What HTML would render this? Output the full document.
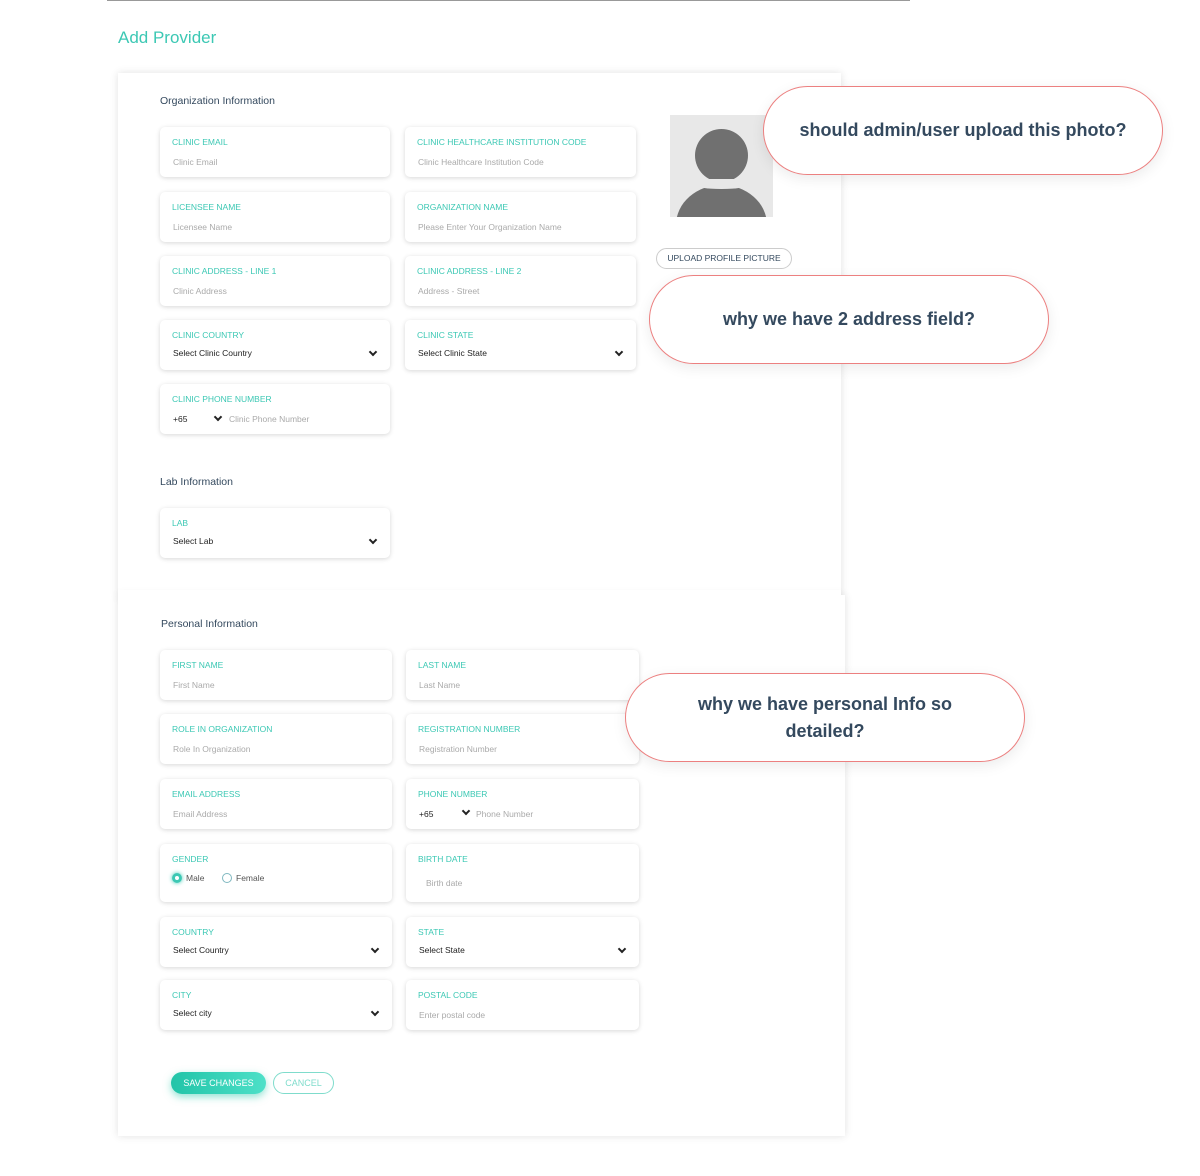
<!DOCTYPE html>
<html><head><meta charset="utf-8"><style>
*{box-sizing:border-box;margin:0;padding:0}
body{width:1200px;height:1176px;background:#fff;position:relative;font-family:"Liberation Sans",sans-serif;overflow:hidden}
.a{position:absolute}
.topline{left:107px;top:0;width:803px;height:1px;background:#999}
.title{left:118px;top:28px;font-size:17px;color:#3cc8b4}
.card{background:#fff;box-shadow:0 0 8px rgba(0,0,0,0.12)}
.h{font-size:10.5px;color:#34495e}
.f{position:absolute;height:50px;background:#fff;border-radius:5px;box-shadow:0 1px 5px rgba(0,0,0,0.16)}
.f .l{position:absolute;left:12px;top:10px;font-size:8.5px;color:#3cc8b4}
.f .p{position:absolute;left:13px;top:30px;font-size:8.5px;color:#aaa}
.f .s{position:absolute;left:13px;top:28px;font-size:8.5px;color:#222}
.f .c{position:absolute;right:14px;top:27px;font-size:9px;color:#222}
.c::after{content:"";display:inline-block;width:4px;height:4px;border-right:2px solid #222;border-bottom:2px solid #222;transform:rotate(45deg)}
.bub{position:absolute;border:1px solid #ec8080;border-radius:45px;background:#fff;box-shadow:0 4px 14px rgba(0,0,0,0.08);display:flex;align-items:center;justify-content:center;text-align:center;font-size:18px;font-weight:bold;color:#34495e;line-height:27px;font-family:"Liberation Sans",sans-serif}
</style></head><body>
<div class="a topline"></div>
<div class="a title">Add Provider</div>
<div class="a card" style="left:118px;top:73px;width:723px;height:525px"></div>
<div class="a card" style="left:118px;top:595px;width:727px;height:541px"></div>
<div class="a" style="left:118px;top:590px;width:723px;height:10px;background:#fff"></div>

<div class="a h" style="left:160px;top:95px">Organization Information</div>
<div class="f" style="left:160px;top:127px;width:230px"><span class="l">CLINIC EMAIL</span><span class="p">Clinic Email</span></div>
<div class="f" style="left:405px;top:127px;width:231px"><span class="l">CLINIC HEALTHCARE INSTITUTION CODE</span><span class="p">Clinic Healthcare Institution Code</span></div>
<div class="f" style="left:160px;top:192px;width:230px"><span class="l">LICENSEE NAME</span><span class="p">Licensee Name</span></div>
<div class="f" style="left:405px;top:192px;width:231px"><span class="l">ORGANIZATION NAME</span><span class="p">Please Enter Your Organization Name</span></div>
<div class="f" style="left:160px;top:256px;width:230px"><span class="l">CLINIC ADDRESS - LINE 1</span><span class="p">Clinic Address</span></div>
<div class="f" style="left:405px;top:256px;width:231px"><span class="l">CLINIC ADDRESS - LINE 2</span><span class="p">Address - Street</span></div>
<div class="f" style="left:160px;top:320px;width:230px"><span class="l">CLINIC COUNTRY</span><span class="s">Select Clinic Country</span><span class="c"></span></div>
<div class="f" style="left:405px;top:320px;width:231px"><span class="l">CLINIC STATE</span><span class="s">Select Clinic State</span><span class="c"></span></div>
<div class="f" style="left:160px;top:384px;width:230px"><span class="l">CLINIC PHONE NUMBER</span><span class="s" style="top:30px">+65</span><span class="c" style="right:auto;left:55px;top:28px"></span><span class="p" style="left:69px">Clinic Phone Number</span></div>

<div class="a h" style="left:160px;top:476px">Lab Information</div>
<div class="f" style="left:160px;top:508px;width:230px"><span class="l">LAB</span><span class="s">Select Lab</span><span class="c"></span></div>

<div class="a" style="left:670px;top:115px;width:103px;height:102px;background:#e8e8e8;overflow:hidden">
<div class="a" style="left:25px;top:14px;width:53px;height:53px;border-radius:50%;background:#707070"></div>
<div class="a" style="left:6px;top:70px;width:91px;height:80px;border-radius:50% 50% 0 0;background:#707070"></div>
<div class="a" style="left:22px;top:64px;width:59px;height:10px;border-radius:0 0 50% 50%;background:#e8e8e8"></div>
</div>
<div class="a" style="left:656px;top:248px;width:136px;height:21px;border:1px solid #ccc;border-radius:11px;font-size:8.5px;color:#34495e;text-align:center;line-height:19px">UPLOAD PROFILE PICTURE</div>

<div class="a h" style="left:161px;top:618px">Personal Information</div>
<div class="f" style="left:160px;top:650px;width:232px"><span class="l">FIRST NAME</span><span class="p">First Name</span></div>
<div class="f" style="left:406px;top:650px;width:233px"><span class="l">LAST NAME</span><span class="p">Last Name</span></div>
<div class="f" style="left:160px;top:714px;width:232px"><span class="l">ROLE IN ORGANIZATION</span><span class="p">Role In Organization</span></div>
<div class="f" style="left:406px;top:714px;width:233px"><span class="l">REGISTRATION NUMBER</span><span class="p">Registration Number</span></div>
<div class="f" style="left:160px;top:779px;width:232px"><span class="l">EMAIL ADDRESS</span><span class="p">Email Address</span></div>
<div class="f" style="left:406px;top:779px;width:233px"><span class="l">PHONE NUMBER</span><span class="s" style="top:30px">+65</span><span class="c" style="right:auto;left:57px"></span><span class="p" style="left:70px">Phone Number</span></div>
<div class="f" style="left:160px;top:844px;width:232px;height:58px"><span class="l">GENDER</span>
<span class="a" style="left:12px;top:29px;width:10px;height:10px;border-radius:50%;border:3px solid #3cc8b4;box-shadow:0 0 4px #3cc8b4"></span><span class="a" style="left:26px;top:29px;font-size:8.5px;color:#555">Male</span>
<span class="a" style="left:62px;top:29px;width:10px;height:10px;border-radius:50%;border:1px solid #7fb8c0"></span><span class="a" style="left:76px;top:29px;font-size:8.5px;color:#555">Female</span></div>
<div class="f" style="left:406px;top:844px;width:233px;height:58px"><span class="l">BIRTH DATE</span><span class="p" style="left:20px;top:34px">Birth date</span></div>
<div class="f" style="left:160px;top:917px;width:232px"><span class="l">COUNTRY</span><span class="s">Select Country</span><span class="c"></span></div>
<div class="f" style="left:406px;top:917px;width:233px"><span class="l">STATE</span><span class="s">Select State</span><span class="c"></span></div>
<div class="f" style="left:160px;top:980px;width:232px"><span class="l">CITY</span><span class="s">Select city</span><span class="c"></span></div>
<div class="f" style="left:406px;top:980px;width:233px"><span class="l">POSTAL CODE</span><span class="p">Enter postal code</span></div>

<div class="a" style="left:171px;top:1072px;width:95px;height:22px;border-radius:11px;background:linear-gradient(90deg,#22c4a8,#4de0c8);box-shadow:0 3px 8px rgba(40,200,170,0.5);color:#fff;font-size:9px;text-align:center;line-height:22px">SAVE CHANGES</div>
<div class="a" style="left:273px;top:1072px;width:61px;height:22px;border-radius:11px;border:1px solid #7fdccc;color:#7fdccc;font-size:9px;text-align:center;line-height:20px">CANCEL</div>

<div class="bub" style="left:763px;top:86px;width:400px;height:89px">should admin/user upload this photo?</div>
<div class="bub" style="left:649px;top:275px;width:400px;height:89px">why we have 2 address field?</div>
<div class="bub" style="left:625px;top:673px;width:400px;height:89px;padding:0 60px">why we have personal Info so detailed?</div>
</body></html>
